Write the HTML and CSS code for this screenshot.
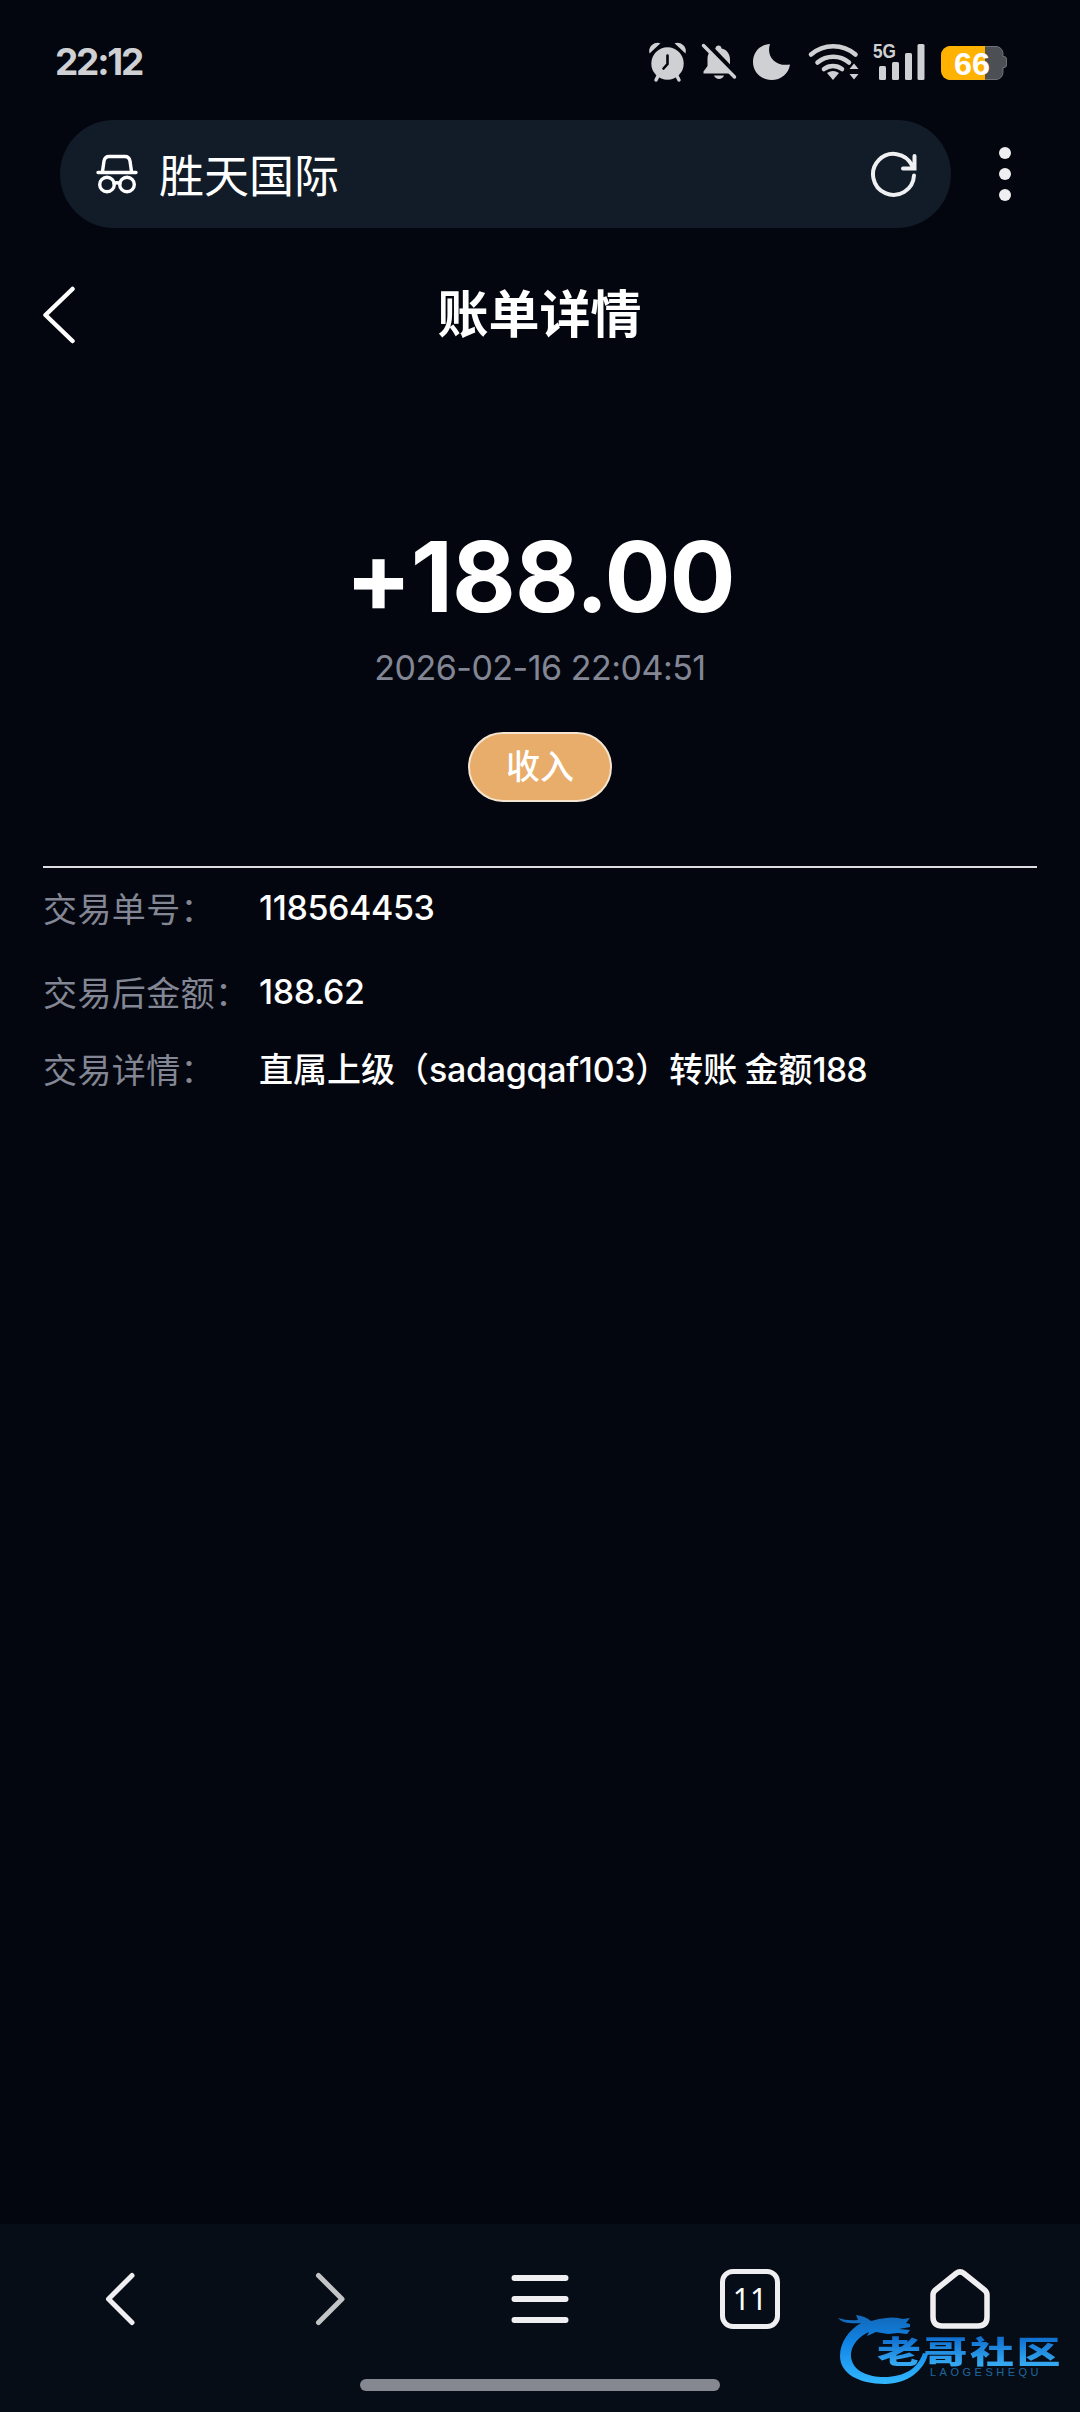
FILE: index.html
```html
<!DOCTYPE html>
<html lang="zh-CN">
<head>
<meta charset="utf-8">
<title>账单详情</title>
<link rel="stylesheet" href="styles.css">
</head>
<body>
<div class="screen">
  <div class="status">
    <span class="clock">22:12</span>
    <svg class="status-icons" width="380" height="50" viewBox="645 37 380 50" fill="#ced0d3">
      <!-- alarm -->
      <circle cx="667.500" cy="63.500" r="16.200"/>
      <path d="M649.500 53.500a8.500 8.500 0 0 1 11-10.200zM685.500 53.500a8.500 8.500 0 0 0-11-10.200z"/>
      <path d="M658.500 75l-2.500 5M676.500 75l2.500 5" stroke="#ced0d3" stroke-width="3.500" stroke-linecap="round"/>
      <path d="M667.500 55.500v8.500l-4 4.500" fill="none" stroke="#03060e" stroke-width="2.600" stroke-linecap="round"/>
      <!-- muted bell -->
      <path d="M703.500 73.500v-2l4-5.500v-7c0-6 3.500-9.500 8-10.500 0-4 6-4 6 0 5 1 8.500 5 8.500 11v6.500l4 5.500v2zM714 75.500h10c-1.500 4.500-8.500 4.500-10 0z"/>
      <path d="M705.500 43l32.500 34" stroke="#03060e" stroke-width="6"/>
      <path d="M703.500 45.500L734.500 77" stroke="#ced0d3" stroke-width="3.500" stroke-linecap="round"/>
      <!-- moon -->
      <path d="M770 44c-4 12 5 23 20 20.500C788.500 74 781 80 771.500 80 761 80 753 72 753 62s7-17.500 17-18z"/>
      <!-- wifi -->
      <g fill="none" stroke="#ced0d3" stroke-width="4.600" stroke-linecap="round">
        <path d="M811 54.500a34 34 0 0 1 44.500 0M817.500 62.500a24.500 24.500 0 0 1 31.500 0M824 69a15 15 0 0 1 18 0"/>
      </g>
      <path d="M827 73q6-4 12 0l-6 7z"/>
      <path d="M849.500 69l4.500-5.500 4.500 5.500zM849.500 74l4.500 5.500 4.500-5.500z"/>
      <!-- signal bars -->
      <rect x="879" y="66" width="7" height="14" rx="1.500"/>
      <rect x="892" y="62" width="7" height="18" rx="1.500"/>
      <rect x="905" y="53" width="7" height="27" rx="1.500"/>
      <rect x="917.500" y="44" width="7" height="36" rx="1.500"/>
      <text x="873" y="58" class="net" textLength="23" lengthAdjust="spacingAndGlyphs">5G</text>
      <!-- battery -->
      <path d="M948 46.500h48a7 7 0 0 1 7 7v3h1q2.500 0 2.500 2.500v6q0 2.500-2.500 2.500h-1v5a7 7 0 0 1-7 7h-48z" fill="#4c4f54" stroke="#6f7276"/>
      <path d="M985 46v34h-35a9 9 0 0 1-9-9V55a9 9 0 0 1 9-9z" fill="#ffb300"/>
      <text x="954" y="74.500" class="charge" textLength="36" lengthAdjust="spacingAndGlyphs">66</text>
    </svg>
  </div>

  <div class="browser">
    <div class="address">
      <svg width="42" height="40" viewBox="0 0 42 40" fill="none" stroke="#fff" stroke-width="3.400" stroke-linecap="round">
        <path d="M6.500 17.500L8 7q1-4.500 5-4.500h16q4 0 5 4.500l1.500 10.500M2 18.500h38M18 29.500q3-1.500 6 0"/>
        <circle cx="11" cy="30.500" r="7.300"/><circle cx="31" cy="30.500" r="7.300"/>
      </svg>
      <span class="site">胜天国际</span>
      <svg class="reload" width="48" height="48" viewBox="0 0 48 48" fill="none" stroke="#eff0f2" stroke-width="4" stroke-linecap="round">
        <path d="M44 25.500A20.500 20.500 0 1 1 42 15.500M44.500 6v12.500H33"/>
      </svg>
    </div>
    <svg class="dots" width="12" height="54" viewBox="0 0 12 54" fill="#efeff1"><circle cx="6" cy="6" r="6"/><circle cx="6" cy="27" r="6"/><circle cx="6" cy="48" r="6"/></svg>
  </div>

  <header class="header">
    <svg width="34" height="58" viewBox="0 0 34 58" fill="none" stroke="#fff" stroke-width="4.500" stroke-linecap="round" stroke-linejoin="round"><path d="M30.500 3L3.500 29 30.500 55"/></svg>
    <h1>账单详情</h1>
  </header>

  <main>
    <section class="summary">
      <div class="amount">+188.00</div>
      <div class="date">2026-02-16 22:04:51</div>
      <span class="tag">收入</span>
    </section>
    <dl class="details">
      <div class="row"><dt>交易单号：</dt><dd class="num">118564453</dd></div>
      <div class="row"><dt>交易后金额：</dt><dd class="num">188.62</dd></div>
      <div class="row"><dt>交易详情：</dt><dd class="note">直属上级（<span class="user">sadagqaf103</span>）转账 金额<span class="num">188</span></dd></div>
    </dl>
  </main>

  <nav class="toolbar">
    <div class="tools">
      <svg width="60" height="60" viewBox="0 0 60 60" fill="none" stroke="#efeff2" stroke-width="5" stroke-linecap="round" stroke-linejoin="round"><path d="M42 6.500L18.500 30 42 53.500"/></svg>
      <svg width="60" height="60" viewBox="0 0 60 60" fill="none" stroke="#c3c4c6" stroke-width="5" stroke-linecap="round" stroke-linejoin="round"><path d="M18.500 6.500L42 30 18.500 53.500"/></svg>
      <svg width="60" height="60" viewBox="0 0 60 60" fill="none" stroke="#efeff2" stroke-width="6" stroke-linecap="round"><path d="M4.500 9h51M4.500 30h51M4.500 51h51"/></svg>
      <span class="tabs">11</span>
      <svg width="60" height="60" viewBox="0 0 60 60" fill="none" stroke="#efeff2" stroke-width="5.500" stroke-linejoin="round"><path d="M3 26q0-3 2.500-5L26 4.500q4-3.200 8 0L54.500 21q2.500 2 2.500 5v22q0 9-9 9H12q-9 0-9-9z"/></svg>
    </div>
    <div class="handle"></div>
  </nav>

  <div class="badge">
    <svg width="92" height="78" viewBox="0 0 92 78">
      <defs><linearGradient id="blue" x1="0" y1="0" x2="0" y2="1"><stop offset="0" stop-color="#1268b8"/><stop offset=".4" stop-color="#1184e6"/><stop offset="1" stop-color="#32b8ff"/></linearGradient></defs>
      <path fill="url(#blue)" d="M0 10q9 3 20 2L18 7q9 1 15 6l8-2q15-3 24 0l7-1-4 5 4 1v3l-11 2 11 1-3 4-9-1-10 1-12-2-9 4 2-4C19 29 10 41 14 53c3 10 16 16 32 16 21 0 34-9 39-24l5 1C86 62 70 76 47 76 20 76 2 65 2 48 2 34 11 22 23 15 14 16 4 15 0 10z"/>
    </svg>
    <span class="badge-name">老哥社区</span>
    <span class="badge-latin">LAOGESHEQU</span>
  </div>
</div>
</body>
</html>
```
FILE: styles.css
```css
* { box-sizing: border-box; }
body { margin: 0; background: #03060e; }
.screen {
  position: relative;
  display: flex;
  flex-direction: column;
  width: 1080px;
  height: 2412px;
  overflow: hidden;
  color: #fff;
  background: #03060e;
  font-family: Inter, "Noto Sans CJK SC", sans-serif;
}
.screen svg { display: block; flex: none; }

.status { display: flex; height: 120px; padding: 37px 55px 0; justify-content: space-between; }
.clock { color: #ced0d3; font-size: 37px; line-height: 49px; font-weight: 700; letter-spacing: -2.200px; }
.net { font: 700 21px "Liberation Sans", sans-serif; }
.charge { font: 700 32px "Liberation Sans", sans-serif; fill: #fff; }

.browser { display: flex; align-items: center; padding-left: 60px; }
.address {
  display: flex;
  align-items: center;
  width: 891px;
  height: 108px;
  padding: 0 33px 0 36px;
  border-radius: 54px;
  background: #121b28;
}
.site { margin-left: 21px; font: 400 45px/60px "Noto Sans CJK SC", sans-serif; }
.reload { margin-left: auto; }
.dots { margin-left: 48px; }

.header { display: flex; align-items: center; height: 172px; padding: 2px 43px 0 42px; }
h1 { flex: 1; margin: 0 34px 8px 0; text-align: center; font: 700 51px/68px "Noto Sans CJK SC", sans-serif; }

main { flex: 1; padding: 0 43px; }
.summary { display: flex; flex-direction: column; align-items: center; height: 466px; padding-top: 117px; }
.amount { font-size: 98px; line-height: 120px; font-weight: 700; letter-spacing: -1px; }
.date { margin-top: 10px; color: #838694; font-size: 34px; line-height: 42px; letter-spacing: -.500px; }
.tag {
  margin-top: 43px;
  width: 144px;
  height: 70px;
  border: 2px solid #f4e4d0;
  border-radius: 35px;
  background: #e8ad6a;
  text-align: center;
  font: 500 34px/62px "Noto Sans CJK SC", sans-serif;
}
.details { margin: 0; border-top: 2px solid #dcdde0; font-size: 34px; line-height: 50px; }
.row { display: flex; margin-top: 15px; }
.row + .row { margin-top: 34px; }
.row + .row + .row { margin-top: 27px; }
dt { width: 216px; color: #838694; font-family: "Noto Sans CJK SC", sans-serif; letter-spacing: .400px; white-space: nowrap; }
dd { margin: 0; font-weight: 500; white-space: nowrap; }
.num { letter-spacing: -.400px; }
.note { padding-top: 1px; word-spacing: -2px; }
.note .num { letter-spacing: -.800px; }
.user { letter-spacing: -.300px; }

.toolbar { height: 188px; padding: 45px 15px 0; background: #070d17; }
.tools { display: grid; grid-template-columns: repeat(5, 1fr); justify-items: center; }
.tabs {
  width: 60px;
  height: 60px;
  border: 5.500px solid #efeff2;
  border-radius: 13px;
  text-align: center;
  font: 400 30px/50px "Noto Sans", sans-serif;
}
.handle { width: 360px; height: 12px; margin: 50px auto 0; border-radius: 6px; background: #858890; }

.badge { position: absolute; left: 838px; top: 2308px; width: 230px; height: 80px; }
.badge-name {
  position: absolute;
  left: 39px;
  top: 18px;
  font: 900 44px/48px "Noto Sans CJK SC", sans-serif;
  letter-spacing: 2.500px;
  white-space: nowrap;
  transform: scaleY(.7);
  color: transparent;
  background: linear-gradient(#1070d0 15%, #34a8f0 90%);
  background-clip: text;
}
.badge-latin {
  position: absolute;
  left: 92px;
  top: 58px;
  color: #1d679f;
  font: 400 11px/13px "Liberation Sans", sans-serif;
  letter-spacing: 3.500px;
}
```
